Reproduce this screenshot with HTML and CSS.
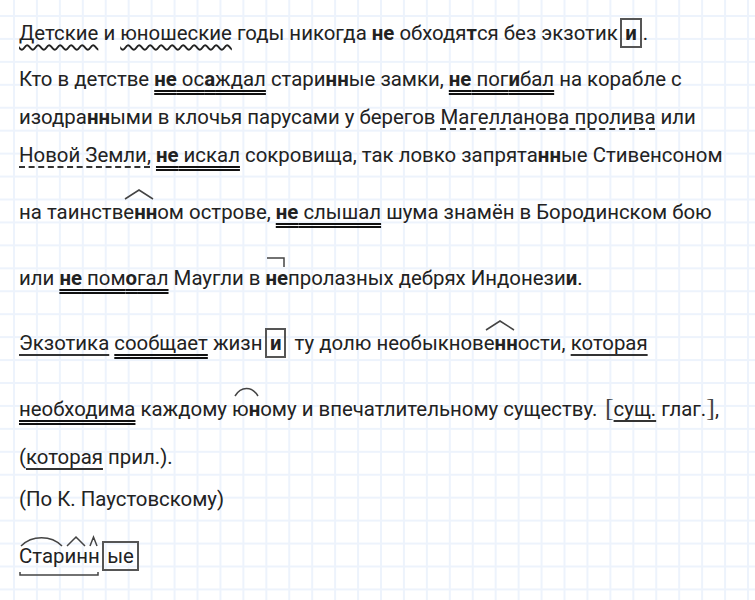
FILE: index.html
```html
<!DOCTYPE html>
<html lang="ru">
<head>
<meta charset="utf-8">
<title>Разбор текста</title>
<link rel="stylesheet" href="styles.css">
</head>
<body>
<main class="page">
  <div class="line"><span class="wave">Детские</span> и <span class="wave">юношеские</span> годы никогда <b>не</b> обходя<b>т</b>ся без экзотик<span class="box bold tight">и</span>.</div>
  <div class="line gap-8">Кто в детстве <span class="double"><b>не</b> ос<b>а</b>ждал</span> стари<b>нн</b>ые замки, <span class="double"><b>не</b> пог<b>и</b>бал</span> на корабле с</div>
  <div class="line">изодра<b>нн</b>ыми в клочья парусами у берегов <span class="dash">Магелланова пролива</span> или</div>
  <div class="line"><span class="dash">Новой Земли,</span> <span class="double"><b>не</b> искал</span> сокровища, так ловко запрята<b>нн</b>ые Стивенсоном</div>
  <div class="line gap-19">на таинстве<span class="mark"><svg class="sign chevron" viewBox="0 0 30 11"><path d="M1 10 15 1 29 10"/></svg><b>нн</b></span>ом острове, <span class="double"><b>не</b> слышал</span> шума знамён в Бородинском бою</div>
  <div class="line gap-28">или <span class="double"><b>не</b> пом<b>о</b>гал</span> Маугли в <span class="mark"><svg class="sign corner" viewBox="0 0 18 10"><path d="M0 1H17V10"/></svg><b>не</b></span>пролазных дебрях Индонези<b>и</b>.</div>
  <div class="line gap-28"><span class="single">Экзотика</span> <span class="double">сообщает</span> жизн<span class="box bold">и</span> ту долю необыкнове<span class="mark"><svg class="sign chevron" viewBox="0 0 30 11"><path d="M1 10 15 1 29 10"/></svg><b>нн</b></span>ости, <span class="single">которая</span></div>
  <div class="line gap-28"><span class="double">необходима</span> каждому ю<span class="mark"><svg class="sign arc" viewBox="0 0 25 10"><path d="M1 9C7 -1 18 -1 24 9"/></svg><b>н</b></span>ому и впечатлительному существу. <span class="bracket open">[</span><span class="single">сущ.</span> глаг.<span class="bracket">]</span>,</div>
  <div class="line gap-10">(<span class="single">которая</span> прил.).</div>
  <div class="line gap-4">(По К. Паустовскому)</div>
  <div class="line gap-19"><span class="word"><svg class="sign root" viewBox="0 0 78 20"><path d="M2 19C13 8 32 8 43 19M48 19 57 10 66 19M71 19 74.500 10 78 19"/></svg><svg class="sign base" viewBox="0 0 78 5"><path d="M1 1V4H79V1"/></svg>Старинн</span><span class="box">ые</span></div>
</main>
</body>
</html>
```
FILE: styles.css
```css
html, body {
  margin: 0;
  padding: 0;
}

body {
  background-color: #fff;
  background-image:
    linear-gradient(to right, #edf3fc 1.5px, transparent 1.5px),
    linear-gradient(to bottom, #edf3fc 1.5px, transparent 1.5px);
  background-size: 22.95px 22.95px;
  background-position: 13px 15px;
  min-height: 600px;
  overflow: hidden;
}

.page {
  padding: 14px 0 0 19px;
  font-family: Roboto, "Noto Sans", sans-serif;
  font-size: 20.4px;
  color: #222;
}

.line {
  line-height: 38px;
  height: 38px;
  white-space: nowrap;
}

.gap-4 { margin-top: 4px; }
.gap-8 { margin-top: 8px; }
.gap-10 { margin-top: 10px; }
.gap-19 { margin-top: 19px; }
.gap-28 { margin-top: 27.67px; }

b, .bold {
  font-weight: 700;
}

.double, .single, .dash, .wave {
  text-decoration-skip-ink: none;
}

.double {
  text-decoration: underline double #111 2px;
  text-underline-offset: 4px;
}

.single {
  text-decoration: underline solid #333 1.5px;
  text-underline-offset: 4px;
}

.dash {
  text-decoration: underline dashed #333 1.5px;
  text-underline-offset: 4px;
}

.wave {
  text-decoration: underline wavy #222 1.6px;
  text-underline-offset: 3.5px;
}

.box {
  display: inline-block;
  margin: 0 3px 0 2.5px;
  padding: 0 3px;
  line-height: 26px;
  border: 2px solid #555;
}

.tight {
  margin-right: 1px;
}

.bracket {
  font-family: "Liberation Serif", serif;
  font-size: 26px;
  line-height: 1;
  font-weight: 400;
  color: #444;
}

.open {
  margin-left: 2.5px;
}

.mark, .word {
  position: relative;
  display: inline-block;
  line-height: 26px;
}

.sign {
  position: absolute;
  fill: none;
  stroke: #444;
  stroke-width: 1.5;
  overflow: visible;
}

.chevron {
  left: -10px;
  top: -10px;
  width: 30px;
  height: 11px;
}

.corner {
  left: 2px;
  top: -8px;
  width: 18px;
  height: 10px;
}

.arc {
  left: -15px;
  top: -9px;
  width: 25px;
  height: 10px;
}

.root {
  left: 0;
  top: -16px;
  width: 78px;
  height: 20px;
}

.base {
  left: 0;
  bottom: -7px;
  width: 78px;
  height: 5px;
}
```
